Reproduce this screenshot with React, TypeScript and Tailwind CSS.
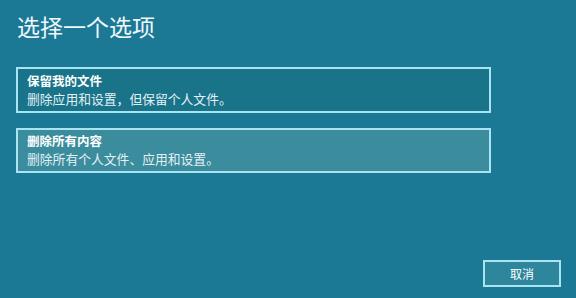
export default function App() {
  const font = { fontFamily: '"Noto Sans CJK SC", "Liberation Sans", sans-serif' };
  return (
    <main
      className="flex h-[298px] w-[576px] flex-col bg-[#1c7996] px-4 pt-[11px] text-white"
      style={font}
    >
      <h1 className="pl-[1px] text-[23px] leading-[30px] font-normal text-[#eef8fb]">选择一个选项</h1>
      <div className="mt-[26px] flex w-[475px] flex-col gap-[15px]">
        <button className="flex h-[46px] flex-col justify-center border-2 border-[#a9e4f2] bg-[#197389] px-[9px] pb-[1px] text-left">
          <span className="text-[12.5px] leading-[18px] font-bold">保留我的文件</span>
          <span className="text-[12.8px] leading-[18px] text-[#e2f1f5]">删除应用和设置，但保留个人文件。</span>
        </button>
        <button className="flex h-[45px] flex-col justify-center border-2 border-[#a9e4f2] bg-[#3b8c9d] px-[9px] pb-[1px] text-left">
          <span className="text-[12.5px] leading-[18px] font-bold">删除所有内容</span>
          <span className="text-[12.8px] leading-[18px] text-[#e2f1f5]">删除所有个人文件、应用和设置。</span>
        </button>
      </div>
      <div className="mt-auto mb-[11px] flex justify-end">
        <button className="mr-[-1px] h-[27px] w-[78px] border-2 border-[#a9e4f2] bg-[#2d869b] text-[12px] text-white">
          取消
        </button>
      </div>
    </main>
  );
}
